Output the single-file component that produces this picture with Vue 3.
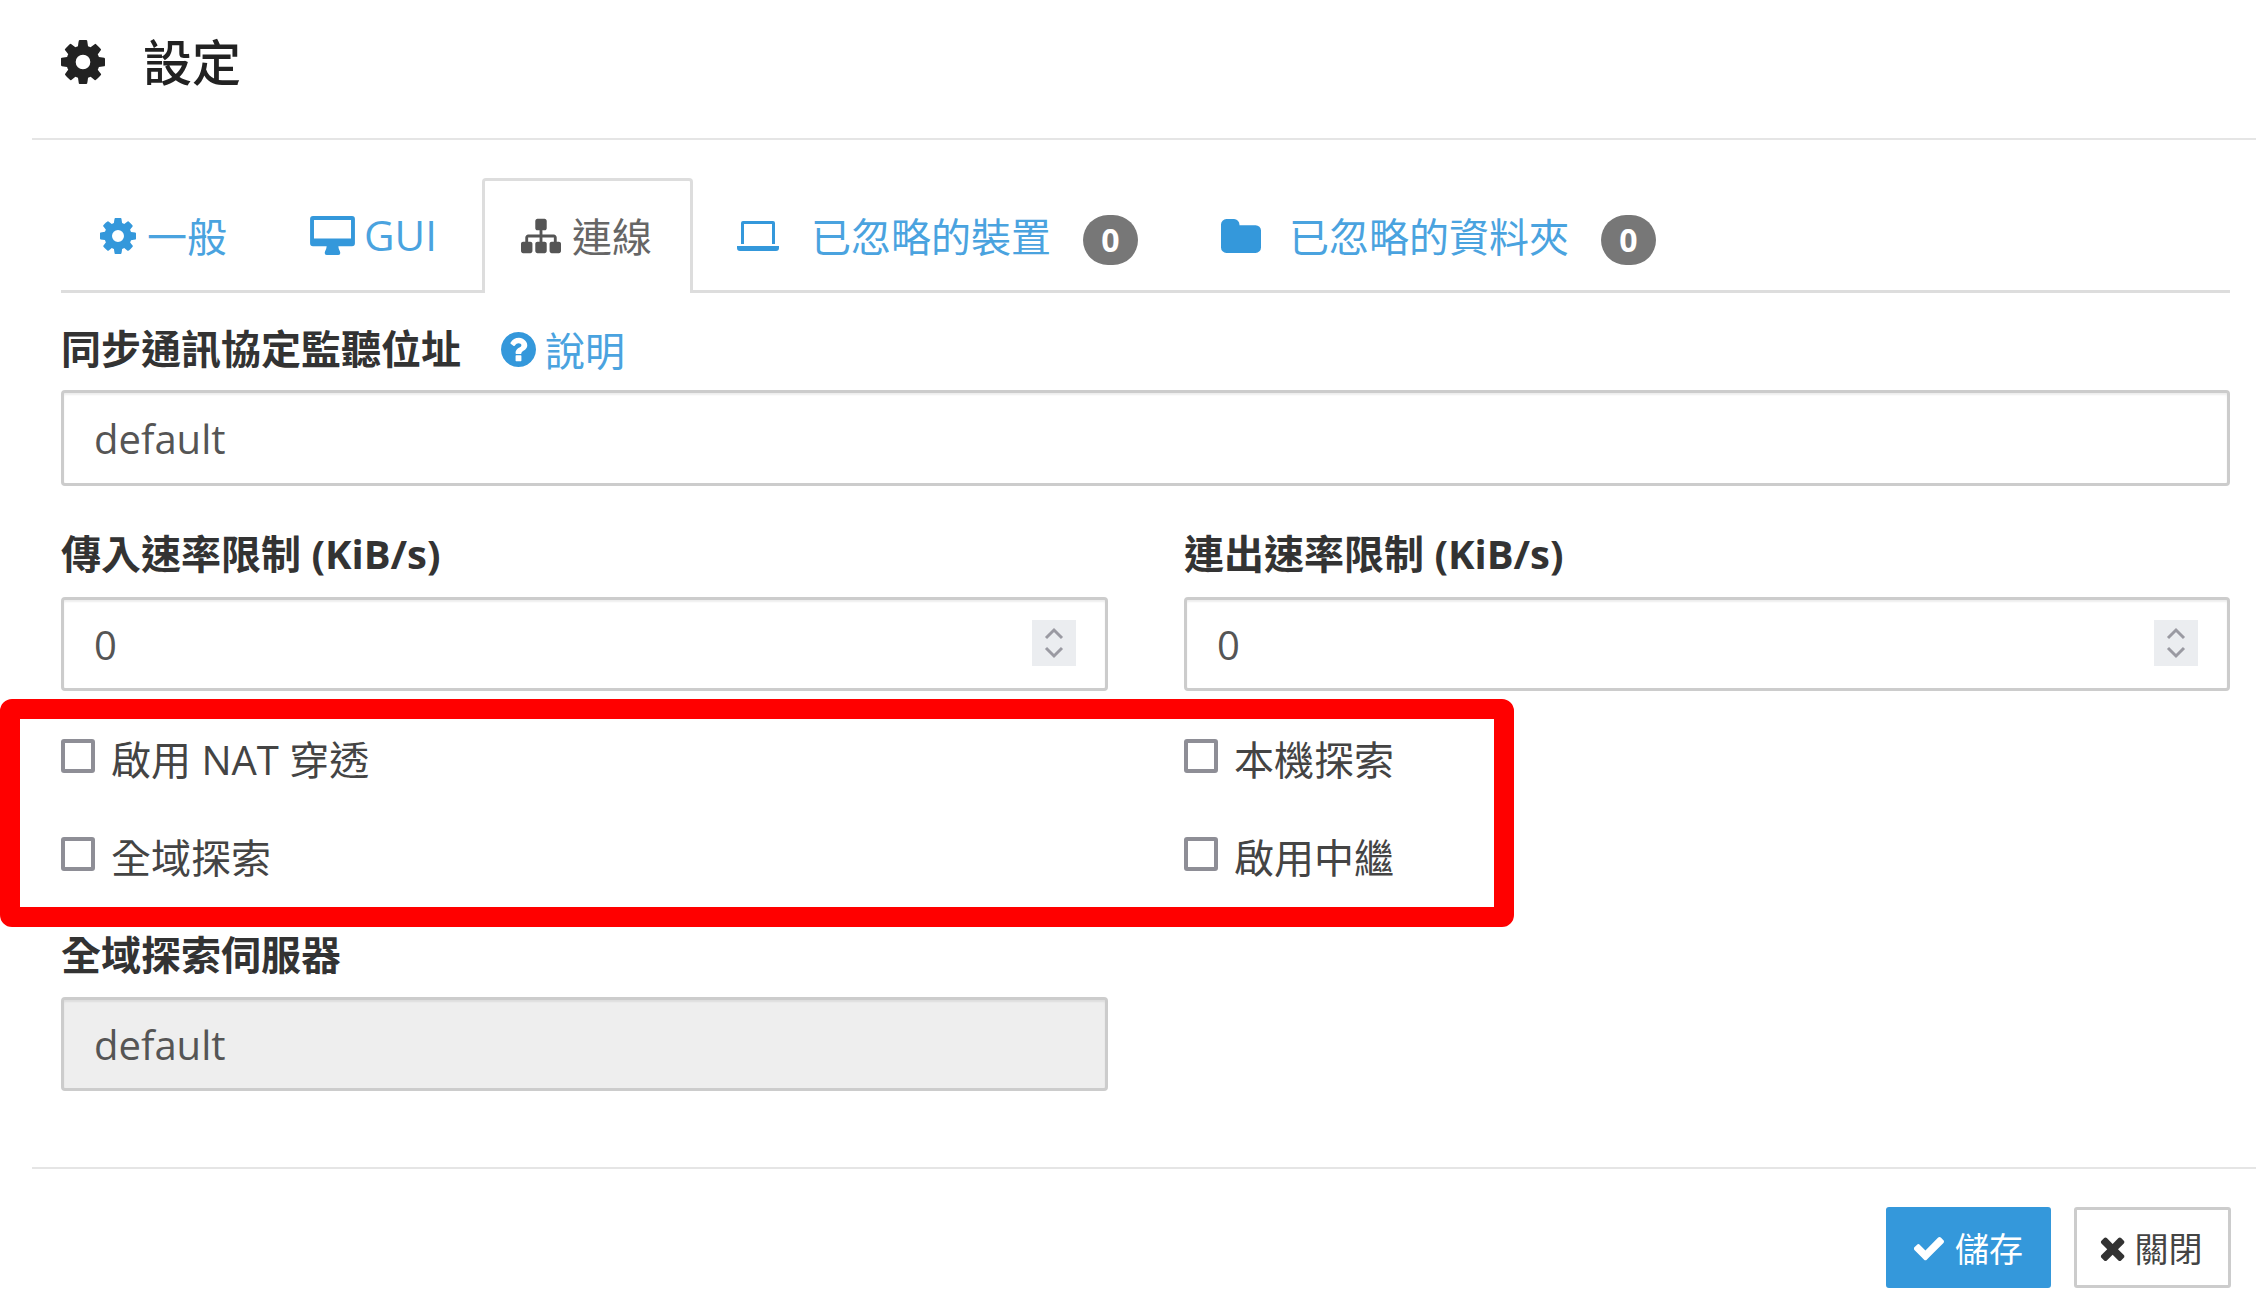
<template>
  <div class="page">
    <header class="head">
      <svg class="head-icon" viewBox="128 128 1536 1536"><path :d="icons.cog" /></svg>
      <h1>設定</h1>
    </header>

    <div class="body">
      <ul class="tabs">
        <li class="tab">
          <svg class="ico ico-cog" viewBox="128 128 1536 1536"><path :d="icons.cog" /></svg>
          <span>一般</span>
        </li>
        <li class="tab tab-gui">
          <svg class="ico ico-desktop" viewBox="0 0 46 40"><path d="M3 0h40a3 3 0 0 1 3 3v25a3 3 0 0 1-3 3H29c0 3 2 5 2 7a2 2 0 0 1-2 2H17a2 2 0 0 1-2-2c0-2 2-4 2-7H3a3 3 0 0 1-3-3V3a3 3 0 0 1 3-3zm1 4v19h38V4z" fill-rule="evenodd" /></svg>
          <span>GUI</span>
        </li>
        <li class="tab active">
          <svg class="ico ico-sitemap" viewBox="0 0 1792 1792"><path :d="icons.sitemap" /></svg>
          <span>連線</span>
        </li>
        <li class="tab wide">
          <svg class="ico ico-laptop" viewBox="0 0 42 30"><path d="M6 0h30a2 2 0 0 1 2 2v21h-3V3H7v20H4V2a2 2 0 0 1 2-2zM0 25h42v2a3 3 0 0 1-3 3H3a3 3 0 0 1-3-3z" /></svg>
          <span>已忽略的裝置</span>
          <b class="badge">0</b>
        </li>
        <li class="tab wide">
          <svg class="ico ico-folder" viewBox="64 128 1664 1408"><path :d="icons.folder" /></svg>
          <span>已忽略的資料夾</span>
          <b class="badge">0</b>
        </li>
      </ul>

      <div class="field">
        <div class="label-row">
          <label>同步通訊協定監聽位址</label>
          <a class="help">
            <svg viewBox="128 128 1536 1536"><path :d="icons.question" /></svg>
            <span>說明</span>
          </a>
        </div>
        <input class="control" type="text" value="default" />
      </div>

      <div class="grid rates">
        <div class="field" v-for="rate in rates" :key="rate">
          <label>{{ rate }}</label>
          <div class="number">
            <input class="control" type="text" value="0" />
            <span class="spinner">
              <svg viewBox="0 0 24 34"><path d="M4 12l8-8 8 8M4 22l8 8 8-8" /></svg>
            </span>
          </div>
        </div>
      </div>

      <div class="grid checks">
        <div class="highlight"></div>
        <label class="check" v-for="item in checks" :key="item">
          <span class="box"></span>
          <span class="check-text">{{ item }}</span>
        </label>
      </div>

      <div class="grid servers">
        <div class="field">
          <label>全域探索伺服器</label>
          <input class="control" type="text" value="default" disabled />
        </div>
      </div>
    </div>

    <footer class="foot">
      <button class="btn primary">
        <svg viewBox="128 256 1543 1280"><path :d="icons.check" /></svg>
        <span>儲存</span>
      </button>
      <button class="btn close">
        <svg viewBox="238 238 1252 1316"><path :d="icons.times" /></svg>
        <span>關閉</span>
      </button>
    </footer>
  </div>
</template>

<script setup>
const rates = ['傳入速率限制 (KiB/s)', '連出速率限制 (KiB/s)']
const checks = ['啟用 NAT 穿透', '本機探索', '全域探索', '啟用中繼']

const icons = {
  cog: 'M1152 896q0-106-75-181t-181-75-181 75-75 181 75 181 181 75 181-75 75-181zm512-109v222q0 12-8 23t-20 13l-185 28q-19 54-39 91 35 50 107 138 10 12 10 25t-9 23q-27 37-99 108t-94 71q-12 0-26-9l-138-108q-44 23-91 38-16 136-29 186-7 28-36 28h-222q-14 0-24.5-8.5t-11.5-21.5l-28-184q-49-16-90-37l-141 107q-10 9-25 9-14 0-25-11-126-114-165-168-7-10-7-23 0-12 8-23 15-21 51-66.5t54-70.5q-27-50-41-99l-183-27q-13-2-21-12.5t-8-23.5v-222q0-12 8-23t19-13l186-28q14-46 39-92-40-57-107-138-10-12-10-24 0-10 9-23 26-36 98.5-107.5t94.5-71.5q13 0 26 10l138 107q44-23 91-38 16-136 29-186 7-28 36-28h222q14 0 24.5 8.5t11.5 21.5l28 184q49 16 90 37l142-107q9-9 24-9 13 0 25 10 129 119 165 170 7 8 7 22 0 12-8 23-15 21-51 66.5t-54 70.5q26 50 41 98l183 28q13 2 21 12.5t8 23.5z',
  sitemap: 'M1792 1248v320q0 40-28 68t-68 28h-320q-40 0-68-28t-28-68v-320q0-40 28-68t68-28h96v-192h-512v192h96q40 0 68 28t28 68v320q0 40-28 68t-68 28h-320q-40 0-68-28t-28-68v-320q0-40 28-68t68-28h96v-192h-512v192h96q40 0 68 28t28 68v320q0 40-28 68t-68 28h-320q-40 0-68-28t-28-68v-320q0-40 28-68t68-28h96v-192q0-52 38-90t90-38h512v-192h-96q-40 0-68-28t-28-68v-320q0-40 28-68t68-28h320q40 0 68 28t28 68v320q0 40-28 68t-68 28h-96v192h512q52 0 90 38t38 90v192h96q40 0 68 28t28 68z',
  folder: 'M1728 608v704q0 92-66 158t-158 66h-1216q-92 0-158-66t-66-158v-960q0-92 66-158t158-66h320q92 0 158 66t66 158v32h672q92 0 158 66t66 158z',
  question: 'M1024 1376v-192q0-14-9-23t-23-9h-192q-14 0-23 9t-9 23v192q0 14 9 23t23 9h192q14 0 23-9t9-23zm256-672q0-88-55.5-163t-138.5-116-170-41q-243 0-371 213-15 24 8 42l132 100q7 6 19 6 16 0 25-12 53-68 86-92 34-24 86-24 48 0 85.5 26t37.5 59q0 38-20 61t-68 45q-63 28-115.5 86.5t-52.5 125.5v36q0 14 9 23t23 9h192q14 0 23-9t9-23q0-19 21.5-49.5t54.5-49.5q32-18 49-28.5t46-35 44.5-48 28-60.5 12.5-81zm384 192q0 209-103 385.5t-279.5 279.5-385.5 103-385.5-103-279.5-279.5-103-385.5 103-385.5 279.5-279.5 385.5-103 385.5 103 279.5 279.5 103 385.5z',
  check: 'M1671 566q0 40-28 68l-724 724-136 136q-28 28-68 28t-68-28l-136-136-362-362q-28-28-28-68t28-68l136-136q28-28 68-28t68 28l294 295 656-657q28-28 68-28t68 28l136 136q28 28 28 68z',
  times: 'M1490 1322q0 40-28 68l-136 136q-28 28-68 28t-68-28l-294-294-294 294q-28 28-68 28t-68-28l-136-136q-28-28-28-68t28-68l294-294-294-294q-28-28-28-68t28-68l136-136q28-28 68-28t68 28l294 294 294-294q28-28 68-28t68 28l136 136q28 28 28 68t-28 68l-294 294 294 294q28 28 28 68z'
}
</script>

<style>
body {
  background: #fff;
  overflow: hidden;
}
</style>

<style scoped>
.page {
  position: relative;
  width: 2256px;
  height: 1316px;
  overflow: hidden;
  font-family: "Open Sans", "Noto Sans CJK TC", sans-serif;
  font-size: 40px;
  color: #333;
}

.head {
  height: 138px;
  margin-left: 32px;
  padding-left: 29px;
  display: flex;
  align-items: center;
  gap: 38px;
  border-bottom: 2px solid #e5e5e5;
}

.head-icon {
  width: 44px;
  height: 44px;
  fill: #222;
  margin-top: -14px;
}

h1 {
  margin: -20px 0 0;
  font-size: 49px;
  font-weight: 500;
  color: #222;
}

.body {
  padding: 38px 26px 0 61px;
}

.tabs {
  list-style: none;
  margin: 0 0 27px;
  padding: 0;
  height: 115px;
  display: flex;
  box-sizing: border-box;
  border-bottom: 3px solid #ddd;
}

.tab {
  height: 112px;
  box-sizing: border-box;
  padding: 0 36px;
  margin-right: 5px;
  display: flex;
  align-items: center;
  gap: 11px;
  color: #4aa3df;
  border: 3px solid transparent;
  border-bottom: 0;
}

.tab span {
  margin-top: -2px;
}

.tab-gui {
  font-size: 42px;
  padding-right: 37px;
}

.tab.active {
  height: 115px;
  padding-bottom: 3px;
  padding-right: 38px;
  color: #666;
  background: #fff;
  border-color: #ddd;
  border-radius: 4px 4px 0 0;
}

.tab.wide {
  gap: 32px;
}

.ico {
  fill: #3498db;
  flex: none;
}

.ico-cog {
  width: 36px;
  height: 36px;
}

.ico-desktop {
  width: 45px;
  height: 39px;
  margin-right: -2px;
}

.ico-sitemap {
  width: 40px;
  height: 40px;
  fill: #555;
}

.ico-laptop {
  width: 42px;
  height: 30px;
}

.ico-folder {
  width: 40px;
  height: 34px;
  margin-right: -4px;
}

.badge {
  width: 55px;
  height: 50px;
  line-height: 50px;
  text-align: center;
  border-radius: 25px;
  background: #777;
  color: #fff;
  font-size: 32px;
  font-weight: 700;
  margin-top: 8px;
}

.field label {
  display: block;
  font-weight: 700;
  line-height: 56px;
  color: #333;
}

.label-row {
  display: flex;
  align-items: center;
  gap: 40px;
  margin-bottom: 12px;
}

.help {
  display: flex;
  align-items: center;
  gap: 9px;
  color: #4aa3df;
}

.help svg {
  width: 35px;
  height: 35px;
  fill: #3498db;
}

.control {
  display: block;
  width: 100%;
  height: 96px;
  box-sizing: border-box;
  padding: 0 30px;
  border: 3px solid #ccc;
  border-radius: 4px;
  background: #fff;
  outline: none;
  font: inherit;
  color: #555;
  box-shadow: inset 0 2px 2px rgba(0, 0, 0, 0.07);
}

.control:disabled {
  background: #eee;
  opacity: 1;
}

.grid {
  display: grid;
  grid-template-columns: 1047px 1046px;
  column-gap: 76px;
}

.rates {
  margin-top: 40px;
}

.rates label {
  margin-bottom: 15px;
}

.rates .control,
.servers .control {
  height: 94px;
}

.number {
  position: relative;
}

.spinner {
  position: absolute;
  right: 32px;
  top: 23px;
  width: 44px;
  height: 46px;
  background: #ebedf0;
  display: flex;
  align-items: center;
  justify-content: center;
}

.spinner svg {
  width: 24px;
  height: 34px;
  fill: none;
  stroke: #9a9aa2;
  stroke-width: 3;
}

.checks {
  position: relative;
  margin-top: 20px;
  row-gap: 42px;
  padding: 20px 0 0;
}

.highlight {
  position: absolute;
  left: -61px;
  top: -12px;
  width: 1514px;
  height: 228px;
  box-sizing: border-box;
  border: 20px solid #f00;
  border-radius: 12px;
  pointer-events: none;
}

.check {
  display: flex;
  align-items: center;
  gap: 16px;
  height: 56px;
  color: #444;
}

.check-text {
  margin-top: -2px;
}

.box {
  width: 34px;
  height: 34px;
  box-sizing: border-box;
  border: 4px solid #8e8e96;
  border-radius: 3px;
  margin-top: -6px;
}

.servers {
  margin-top: 42px;
}

.servers label {
  margin-bottom: 14px;
}

.foot {
  position: absolute;
  left: 32px;
  right: 0;
  top: 1167px;
  padding: 38px 25px 0 0;
  border-top: 2px solid #e5e5e5;
  display: flex;
  justify-content: flex-end;
  gap: 23px;
}

.btn {
  height: 81px;
  width: 157px;
  padding: 0;
  box-sizing: border-box;
  border: 3px solid #ccc;
  border-radius: 3px;
  background: #fff;
  color: #444;
  font: inherit;
  font-size: 34px;
  display: flex;
  align-items: center;
  justify-content: center;
  gap: 8px;
}

.btn svg {
  width: 26px;
  height: 26px;
  fill: #333;
}

.btn.close {
  gap: 10px;
}

.btn.close span {
  margin-right: 4px;
}

.btn.primary {
  width: 165px;
  background: #3498db;
  border-color: #3498db;
  color: #fff;
  gap: 11px;
}

.btn.primary svg {
  width: 30px;
  fill: #fff;
}
</style>
